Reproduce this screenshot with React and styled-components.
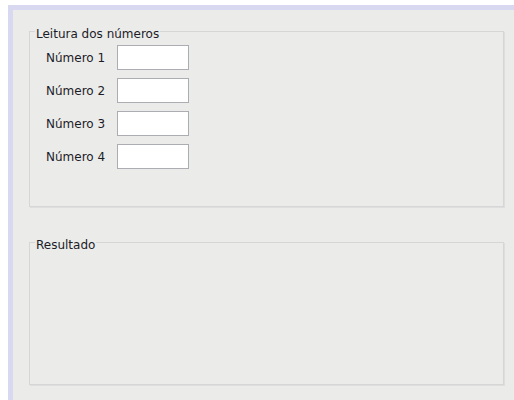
import React from "react";
import styled, { createGlobalStyle } from "styled-components";

const GlobalStyle = createGlobalStyle`
  html, body, #root {
    margin: 0;
    height: 100%;
  }
  body {
    background: #ffffff;
    font-family: "DejaVu Sans", "Liberation Sans", sans-serif;
    font-size: 12px;
    color: #1c1c28;
  }
`;

// janela: faixa branca + moldura lilás em cima e à esquerda
const Page = styled.div`
  height: 100%;
  box-sizing: border-box;
  padding: 5px 0 0 8px;
`;

const Frame = styled.div`
  height: 100%;
  box-sizing: border-box;
  background: #ebebe9;
  border-top: 5px solid #d8d8f0;
  border-left: 5px solid #d8d8f0;
  padding: 12px 10px 0 16px;
  display: flex;
  flex-direction: column;
  gap: 26px;
`;

const GroupBox = styled.fieldset`
  margin: 0;
  padding: 0 0 0 16px;
  height: ${(p) => p.$height}px;
  box-sizing: border-box;
  border: 1px solid #d6d6d6;
  box-shadow: 1px 1px 0 #dedede;
  min-width: 0;
`;

const Legend = styled.legend`
  margin-left: -11px;
  padding: 6px 1px 0 1px;
  line-height: 13px;
  font-size: 12px;
`;

const Fields = styled.div`
  display: grid;
  grid-template-columns: 71px 72px;
  row-gap: 8px;
  margin-top: 4px;
`;

const Label = styled.label`
  align-self: center;
  white-space: nowrap;
`;

const TextBox = styled.input`
  width: 72px;
  height: 25px;
  box-sizing: border-box;
  border: 1px solid #abadb3;
  background: #ffffff;
  font: inherit;
  padding: 0 3px;
  outline: none;
`;

export default function App() {
  const campos = ["Número 1", "Número 2", "Número 3", "Número 4"];

  return (
    <>
      <GlobalStyle />
      <Page>
        <Frame>
          <GroupBox $height={185}>
            <Legend>Leitura dos números</Legend>
            <Fields>
              {campos.map((c) => (
                <React.Fragment key={c}>
                  <Label>{c}</Label>
                  <TextBox type="text" />
                </React.Fragment>
              ))}
            </Fields>
          </GroupBox>

          <GroupBox $height={152}>
            <Legend>Resultado</Legend>
          </GroupBox>
        </Frame>
      </Page>
    </>
  );
}
